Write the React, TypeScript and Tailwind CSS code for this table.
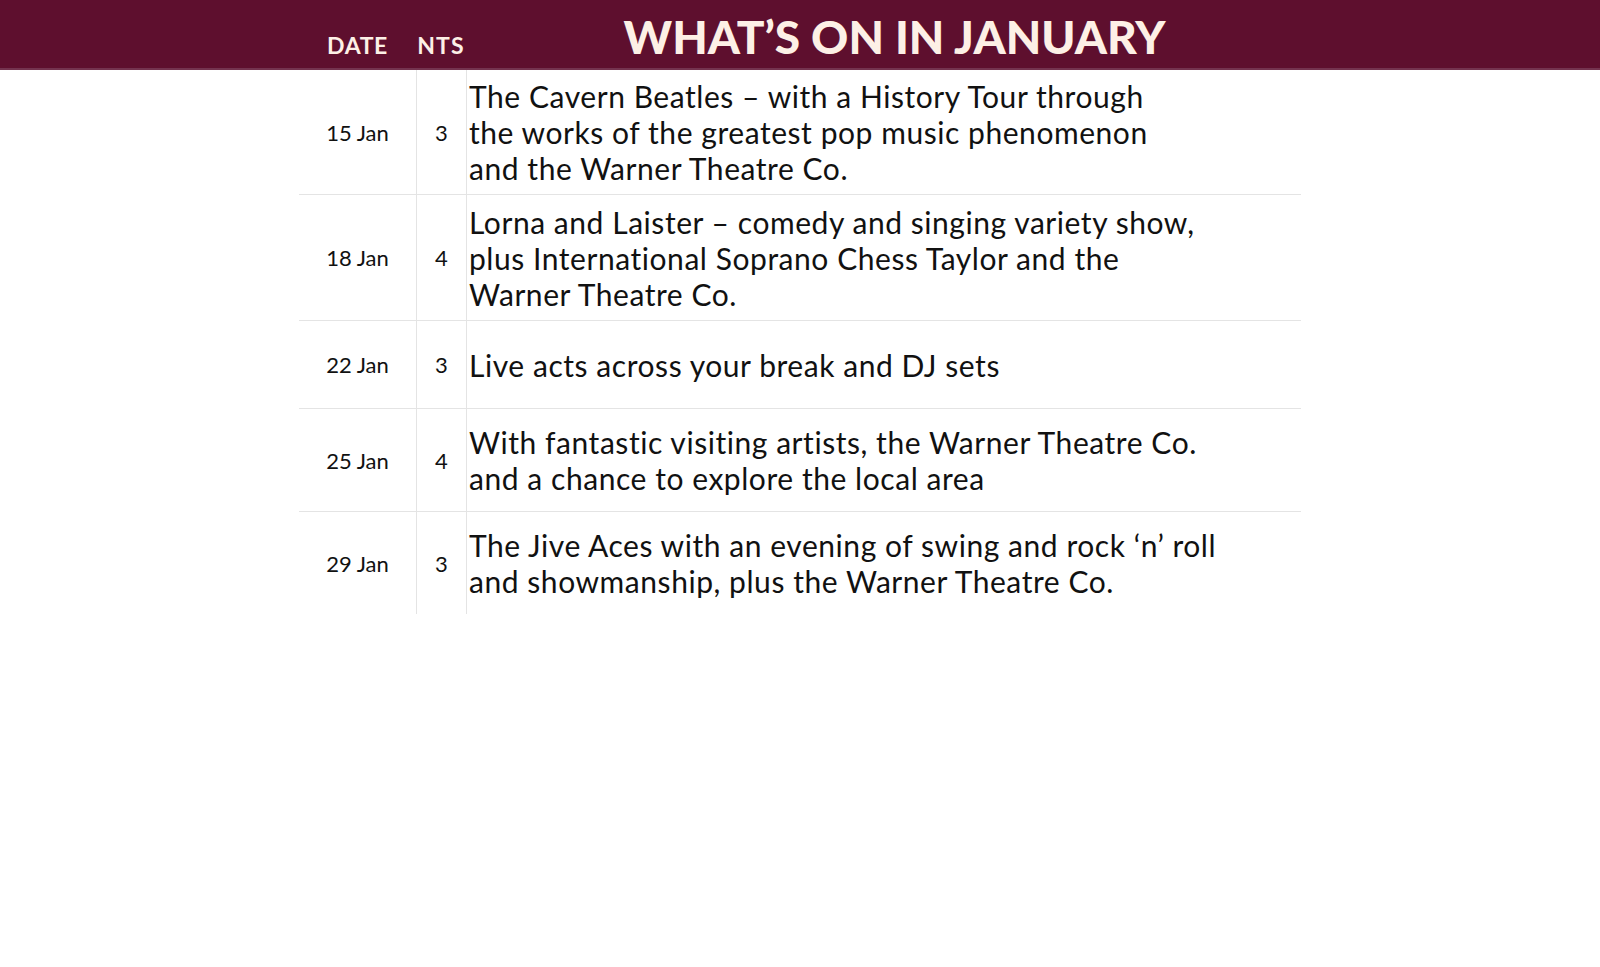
const rows = [
  {
    date: "15 Jan",
    nts: 3,
    h: "h-[124px]",
    lines: [
      "The Cavern Beatles – with a History Tour through",
      "the works of the greatest pop music phenomenon",
      "and the Warner Theatre Co.",
    ],
  },
  {
    date: "18 Jan",
    nts: 4,
    h: "h-[126px]",
    lines: [
      "Lorna and Laister – comedy and singing variety show,",
      "plus International Soprano Chess Taylor and the",
      "Warner Theatre Co.",
    ],
  },
  {
    date: "22 Jan",
    nts: 3,
    h: "h-[88px]",
    lines: ["Live acts across your break and DJ sets"],
  },
  {
    date: "25 Jan",
    nts: 4,
    h: "h-[103px]",
    lines: [
      "With fantastic visiting artists, the Warner Theatre Co.",
      "and a chance to explore the local area",
    ],
  },
  {
    date: "29 Jan",
    nts: 3,
    h: "h-[103px]",
    lines: [
      "The Jive Aces with an evening of swing and rock ‘n’ roll",
      "and showmanship, plus the Warner Theatre Co.",
    ],
  },
]

export default function App() {
  return (
    <div className="min-h-[967px] w-full bg-white font-['Lato',sans-serif] text-[#111]">
      <header className="h-[70px] w-full border-b-2 border-[#74334f] bg-[#5e0f2e]">
        <div className="mx-auto grid h-full w-[1002px] grid-cols-[117px_50px_835px] text-[#fdf0e6]">
          <div className="flex items-end justify-center pb-[11px] text-[23px] font-bold leading-none tracking-[0.6px]">
            DATE
          </div>
          <div className="flex items-end justify-center pb-[11px] text-[23px] font-bold leading-none tracking-[1.2px]">
            NTS
          </div>
          <div className="flex items-end justify-center pb-[8px] pl-[22px] text-[46px] font-black leading-none">
            WHAT’S ON IN JANUARY
          </div>
        </div>
      </header>

      <div className="mx-auto w-[1002px]">
        {rows.map((row, i) => (
          <div
            key={row.date}
            className={`grid grid-cols-[117px_50px_835px] ${row.h} ${i > 0 ? "border-t border-[#e4e4e4]" : ""}`}
          >
            <div className="flex items-center justify-center text-[22px]">{row.date}</div>
            <div className="flex items-center justify-center border-l border-[#e4e4e4] text-[22px]">
              {row.nts}
            </div>
            <div className="flex flex-col justify-center border-l border-[#e4e4e4] pl-[2px] text-[30px] leading-[36px] tracking-[0.55px]">
              {row.lines.map((line) => (
                <span key={line}>{line}</span>
              ))}
            </div>
          </div>
        ))}
      </div>
    </div>
  )
}
